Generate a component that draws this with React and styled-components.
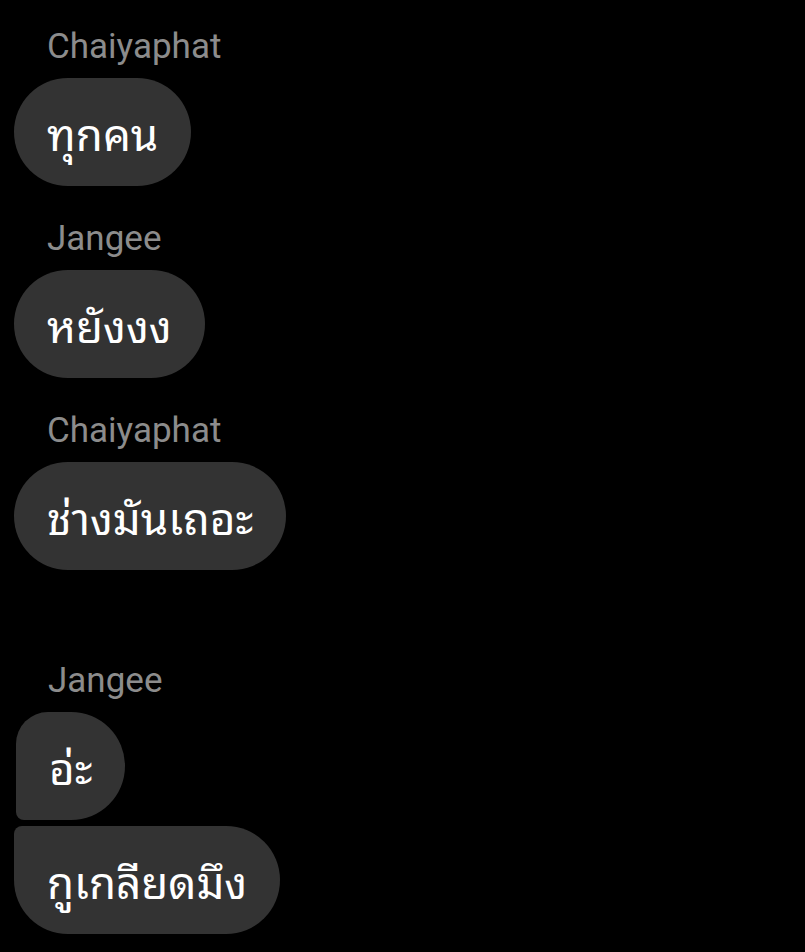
import React from "react";
import styled, { createGlobalStyle } from "styled-components";

const Global = createGlobalStyle`
  html, body { margin: 0; padding: 0; background: #000; }
  body { font-family: Roboto, "Noto Sans", sans-serif; }
`;

const Thread = styled.div`
  display: flex;
  flex-direction: column;
  align-items: flex-start;
  padding: 26px 0 0 14px;
  background: #000;
  min-height: 952px;
  box-sizing: border-box;
`;

const Group = styled.div`
  display: flex;
  flex-direction: column;
  align-items: flex-start;
  margin-top: ${(p) => p.$top}px;
  gap: 6px;
`;

const Name = styled.div`
  font-family: Roboto, "Noto Sans", sans-serif;
  font-size: 35px;
  line-height: 41px;
  color: #8c8c8c;
  margin-left: ${(p) => p.$indent || 33}px;
  margin-bottom: 5px;
`;

const Bubble = styled.div`
  height: 108px;
  box-sizing: border-box;
  display: flex;
  align-items: center;
  padding: 0 33px 2px;
  margin-left: ${(p) => p.$shift || 0}px;
  background: #333333;
  color: #ffffff;
  font-family: "Noto Sans Thai Looped", "Noto Sans Thai", "Noto Sans", sans-serif;
  font-size: 44px;
  font-weight: 400;
  line-height: 1;
  white-space: nowrap;
  border-radius: ${(p) => p.$radius || "54px"};
`;

const messages = [
  { name: "Chaiyaphat", top: 0, items: [{ text: "ทุกคน" }] },
  { name: "Jangee", top: 32, items: [{ text: "หยังงง" }] },
  { name: "Chaiyaphat", top: 32, items: [{ text: "ช่างมันเถอะ" }] },
  {
    name: "Jangee",
    top: 90,
    indent: 34,
    items: [
      { text: "อ่ะ", radius: "32px 54px 54px 8px", shift: 2 },
      { text: "กูเกลียดมึง", radius: "8px 54px 54px 54px" },
    ],
  },
];

export default function App() {
  return (
    <>
      <Global />
      <Thread>
        {messages.map((m, i) => (
          <Group key={i} $top={m.top}>
            <Name $indent={m.indent}>{m.name}</Name>
            {m.items.map((b, j) => (
              <Bubble key={j} $radius={b.radius} $shift={b.shift}>
                {b.text}
              </Bubble>
            ))}
          </Group>
        ))}
      </Thread>
    </>
  );
}
